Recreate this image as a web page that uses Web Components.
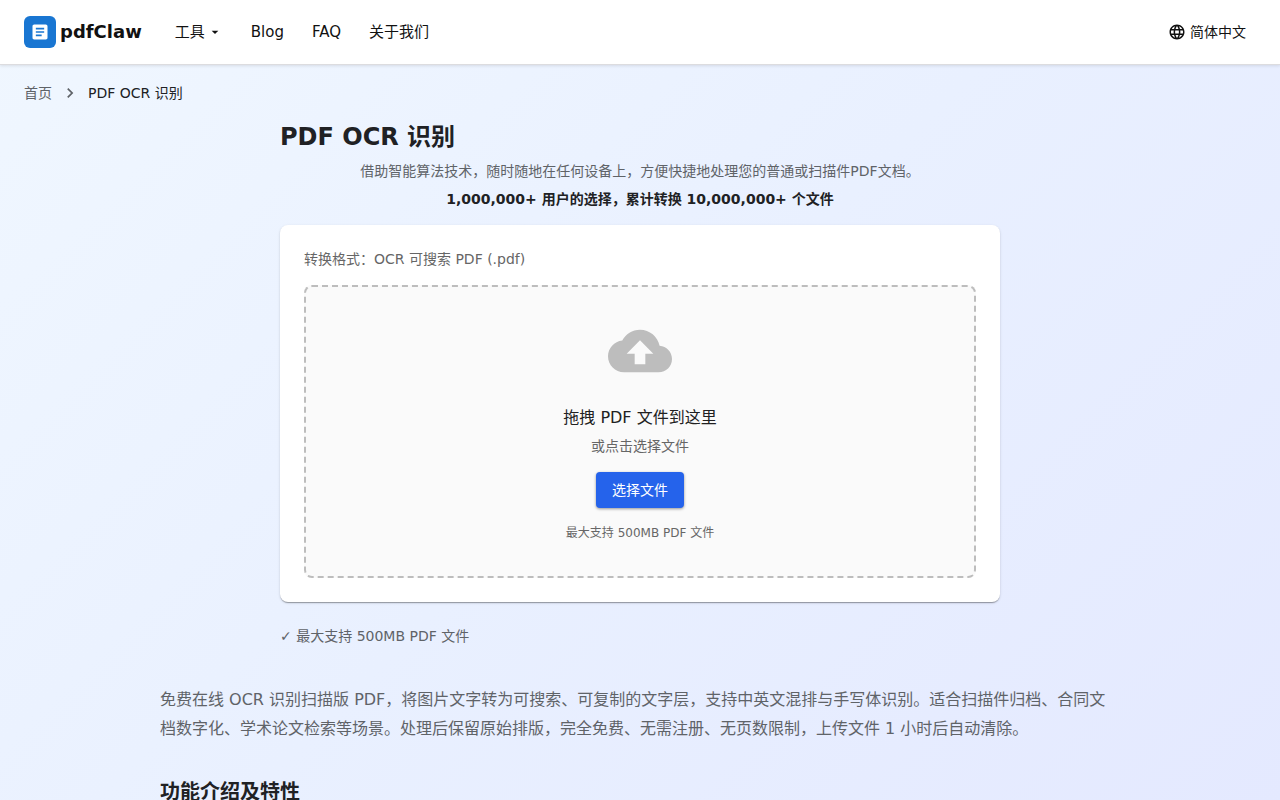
<!DOCTYPE html>
<html lang="zh-CN">
<head>
<meta charset="utf-8">
<meta name="viewport" content="width=device-width, initial-scale=1">
<title>PDF OCR 识别 - pdfClaw</title>
<style>
  * {
    box-sizing: border-box;
  }

  body {
    margin: 0;
    min-height: 100vh;
    background: linear-gradient(135deg, #f0f7ff 0%, #e9f0ff 50%, #e4e9ff 100%);
    color: #202124;
    font: 14px/20px "DejaVu Sans", "Noto Sans CJK SC", sans-serif;
  }
</style>
</head>
<body>
<pdf-app></pdf-app>

<script>
const base = `
* { box-sizing: border-box; }
a { color: inherit; text-decoration: none; }
h1, h2, p, ol { margin: 0; padding: 0; }
svg { display: block; fill: currentColor; }
`;

// parse each template once and clone it for every instance
function define(name, style, html) {
  const tmpl = document.createElement("template");
  tmpl.innerHTML = `<style>${base}${style}</style>${html}`;

  customElements.define(
    name,
    class extends HTMLElement {
      constructor() {
        super();
        this.attachShadow({ mode: "open" }).appendChild(tmpl.content.cloneNode(true));
      }
    },
  );
}

define(
  "pdf-logo",
  `
:host { display: block; }
a {
  display: flex;
  align-items: center;
  gap: 4px;
  font-size: 18px;
  font-weight: 700;
  line-height: 28px;
}
.mark {
  display: grid;
  place-items: center;
  width: 32px;
  height: 32px;
  border-radius: 6px;
  background: #1976d2;
  color: #fff;
}
`,
  `
<a href="#">
  <span class="mark">
    <svg width="20" height="20" viewBox="0 0 24 24" aria-hidden="true"><path d="M19 3H5c-1.100 0-2 .9-2 2v14c0 1.100.9 2 2 2h14c1.100 0 2-.9 2-2V5c0-1.100-.9-2-2-2zm-5 14H7v-2h7v2zm3-4H7v-2h10v2zm0-4H7V7h10v2z"/></svg>
  </span>
  <span>pdfClaw</span>
</a>
`,
);

define(
  "pdf-header",
  `
:host {
  display: flex;
  align-items: center;
  box-sizing: border-box;
  height: 65px;
  padding: 0 24px;
  border-bottom: 1px solid #dcdcdf;
  background: #fff;
  color: #111;
  box-shadow: 0 1px 3px rgba(0, 0, 0, 0.1);
}
nav {
  display: flex;
  flex: 1;
  align-items: center;
  gap: 28px;
  margin-left: 33px;
  font-size: 15px;
  line-height: 24px;
}
button {
  display: flex;
  align-items: center;
  gap: 2px;
  padding: 0;
  border: 0;
  background: none;
  color: inherit;
  font: inherit;
  cursor: pointer;
}
.lang {
  gap: 4px;
  padding: 0 10px;
  font-size: 14px;
}
`,
  `
<pdf-logo></pdf-logo>
<nav>
  <button type="button" aria-haspopup="true">工具
    <svg width="16" height="16" viewBox="0 0 24 24" aria-hidden="true"><path d="m7 10 5 5 5-5z"/></svg>
  </button>
  <a href="#">Blog</a>
  <a href="#">FAQ</a>
  <a href="#">关于我们</a>
</nav>
<button class="lang" type="button" aria-haspopup="true">
  <svg width="18" height="18" viewBox="0 0 24 24" aria-hidden="true"><path d="M11.990 2C6.470 2 2 6.480 2 12s4.470 10 9.990 10C17.520 22 22 17.520 22 12S17.520 2 11.990 2zm6.930 6h-2.950c-.32-1.250-.78-2.450-1.380-3.560 1.840.63 3.370 1.910 4.330 3.560zM12 4.040c.83 1.200 1.480 2.530 1.910 3.960h-3.820c.43-1.430 1.080-2.760 1.910-3.960zM4.260 14C4.100 13.360 4 12.690 4 12s.1-1.360.26-2h3.380c-.08.66-.14 1.320-.14 2s.06 1.340.14 2H4.260zm.82 2h2.950c.32 1.250.78 2.450 1.380 3.560-1.840-.63-3.370-1.900-4.330-3.560zm2.950-8H5.080c.96-1.660 2.490-2.930 4.330-3.560C8.810 5.550 8.350 6.750 8.030 8zM12 19.960c-.83-1.200-1.480-2.530-1.910-3.960h3.820c-.43 1.430-1.080 2.760-1.910 3.960zM14.340 14H9.660c-.09-.66-.16-1.320-.16-2s.07-1.350.16-2h4.680c.09.65.16 1.320.16 2s-.07 1.340-.16 2zm.25 5.560c.6-1.110 1.060-2.310 1.380-3.560h2.950c-.96 1.650-2.490 2.930-4.330 3.560zM16.360 14c.08-.66.14-1.320.14-2s-.06-1.340-.14-2h3.380c.16.64.26 1.310.26 2s-.1 1.360-.26 2h-3.380z"/></svg>
  <span>简体中文</span>
</button>
`,
);

define(
  "pdf-breadcrumb",
  `
:host { display: block; padding: 18px 24px; }
ol {
  display: flex;
  align-items: center;
  gap: 8px;
  list-style: none;
}
li { display: block; }
a, svg { color: #5f6368; }
`,
  `
<nav aria-label="breadcrumb">
  <ol>
    <li><a href="#">首页</a></li>
    <li aria-hidden="true"><svg width="20" height="20" viewBox="0 0 24 24"><path d="M10 6 8.590 7.410 13.170 12l-4.580 4.590L10 18l6-6z"/></svg></li>
    <li aria-current="page">PDF OCR 识别</li>
  </ol>
</nav>
`,
);

define(
  "pdf-dropzone",
  `
:host {
  display: flex;
  flex-direction: column;
  align-items: center;
  padding: 32px 24px 34px;
  border: 2px dashed #bdbdbd;
  border-radius: 8px;
  background: #fafafa;
  color: #666;
  text-align: center;
}
svg { margin-bottom: 20px; color: #bdbdbd; }
.title {
  margin-bottom: 3px;
  color: #212121;
  font-size: 16px;
  line-height: 30px;
}
button {
  height: 36px;
  margin: 16px 0;
  padding: 0 16px;
  border: 0;
  border-radius: 4px;
  background: #2563eb;
  box-shadow: 0 1px 3px rgba(0, 0, 0, 0.4);
  color: #fff;
  font: inherit;
  cursor: pointer;
}
.hint { font-size: 12px; line-height: 18px; }
`,
  `
<svg width="64" height="64" viewBox="0 0 24 24" aria-hidden="true"><path d="M19.350 10.040C18.670 6.590 15.640 4 12 4 9.110 4 6.600 5.640 5.350 8.040 2.340 8.360 0 10.910 0 14c0 3.310 2.690 6 6 6h13c2.760 0 5-2.240 5-5 0-2.640-2.050-4.780-4.650-4.960zM14 13v4h-4v-4H7l5-5 5 5h-3z"/></svg>
<p class="title">拖拽 PDF 文件到这里</p>
<p>或点击选择文件</p>
<button type="button">选择文件</button>
<p class="hint"><slot></slot></p>
`,
);

define(
  "pdf-card",
  `
:host {
  display: block;
  padding: 24px;
  border-radius: 8px;
  background: #fff;
  box-shadow: 0 2px 1px -1px rgba(0, 0, 0, 0.2), 0 1px 1px rgba(0, 0, 0, 0.14), 0 1px 3px rgba(0, 0, 0, 0.12);
}
.format { margin-bottom: 16px; color: #666; }
`,
  `
<p class="format"><slot name="format"></slot></p>
<slot></slot>
`,
);

define(
  "pdf-converter",
  `
:host {
  display: block;
  width: 100%;
  max-width: 720px;
  margin: 0 auto;
}
h1 { font-size: 24px; line-height: 32px; }
p { text-align: center; }
.lead { margin-top: 8px; color: #5f6368; }
.stats { margin: 8px 0 16px; font-weight: 700; }
.note { margin-top: 24px; color: #5f6368; text-align: left; }
`,
  `
<h1>PDF OCR 识别</h1>
<p class="lead">借助智能算法技术，随时随地在任何设备上，方便快捷地处理您的普通或扫描件PDF文档。</p>
<p class="stats">1,000,000+ 用户的选择，累计转换 10,000,000+ 个文件</p>
<pdf-card>
  <span slot="format">转换格式：OCR 可搜索 PDF (.pdf)</span>
  <pdf-dropzone>最大支持 500MB PDF 文件</pdf-dropzone>
</pdf-card>
<p class="note">✓ 最大支持 500MB PDF 文件</p>
`,
);

define(
  "pdf-intro",
  `
:host {
  display: block;
  width: 100%;
  max-width: 960px;
  margin: 39px auto 0;
}
p {
  margin-bottom: 33px;
  color: #5f6368;
  font-size: 16px;
  line-height: 29px;
}
h2 { font-size: 20px; line-height: 32px; }
`,
  `
<p>免费在线 OCR 识别扫描版 PDF，将图片文字转为可搜索、可复制的文字层，支持中英文混排与手写体识别。适合扫描件归档、合同文档数字化、学术论文检索等场景。处理后保留原始排版，完全免费、无需注册、无页数限制，上传文件 1 小时后自动清除。</p>
<h2>功能介绍及特性</h2>
`,
);

define(
  "pdf-app",
  `
:host { display: block; }
`,
  `
<pdf-header></pdf-header>
<pdf-breadcrumb></pdf-breadcrumb>
<main>
  <pdf-converter></pdf-converter>
  <pdf-intro></pdf-intro>
</main>
`,
);
</script>
</body>
</html>
